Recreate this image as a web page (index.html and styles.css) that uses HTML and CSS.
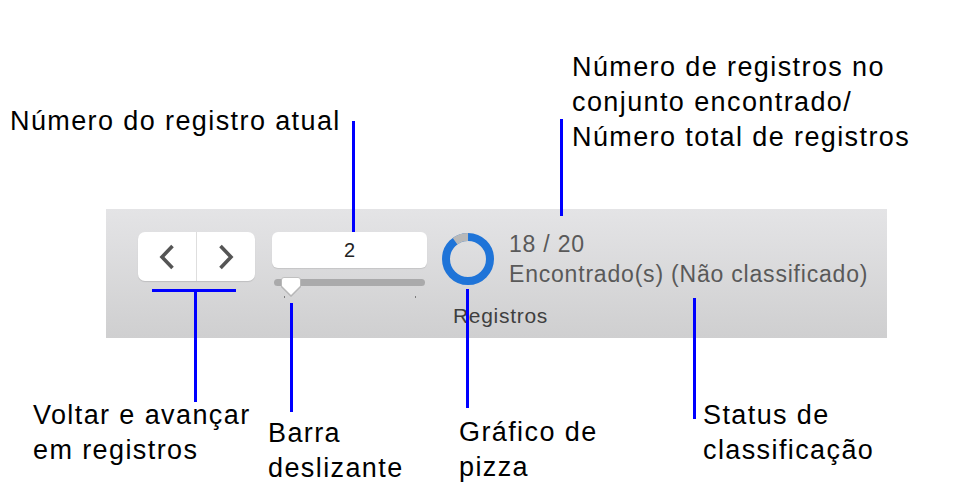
FILE: index.html
```html
<!DOCTYPE html>
<html lang="pt-BR">
<head>
<meta charset="utf-8">
<title>Registros</title>
<link rel="stylesheet" href="styles.css">
</head>
<body>
<div class="stage">
  <div class="toolbar">
    <div class="controls">
      <div class="nav">
        <span class="nav-btn">
          <svg width="18" height="28" viewBox="0 0 18 28"><polyline points="14.5,3 4,14 14.5,25" fill="none" stroke="#555" stroke-width="3.6"/></svg>
        </span>
        <span class="nav-divider"></span>
        <span class="nav-btn">
          <svg width="18" height="28" viewBox="0 0 18 28"><polyline points="3.5,3 14,14 3.5,25" fill="none" stroke="#555" stroke-width="3.6"/></svg>
        </span>
      </div>
      <div class="record">
        <div class="field">2</div>
        <div class="slider">
          <div class="track"></div>
          <svg class="thumb" width="22" height="21" viewBox="0 0 22 21"><path d="M4 1.5 H18 Q20.5 1.5 20.5 4 V10 L11 19.5 L1.5 10 V4 Q1.5 1.5 4 1.5 Z" fill="#fff" stroke="#b5b5b5" stroke-width="0.8"/></svg>
          <i class="tick tick-start"></i>
          <i class="tick tick-end"></i>
        </div>
      </div>
      <svg class="pie" width="52" height="52" viewBox="0 0 52 52">
        <circle cx="26" cy="26" r="22" fill="none" stroke="#1f74d8" stroke-width="8"/>
        <circle cx="26" cy="26" r="22" fill="none" stroke="#b8b8b8" stroke-width="8" stroke-dasharray="13.82 140" transform="rotate(-126 26 26)"/>
      </svg>
      <div class="stats">
        <div>18 / 20</div>
        <div>Encontrado(s) (Não classificado)</div>
      </div>
    </div>
    <div class="group-label">Registros</div>
  </div>

  <div class="note note-current">Número do registro atual</div>
  <div class="note note-count">Número de registros no<br>conjunto encontrado/<br>Número total de registros</div>
  <div class="note note-nav">Voltar e avançar<br>em registros</div>
  <div class="note note-slider">Barra<br>deslizante</div>
  <div class="note note-pie">Gráfico de<br>pizza</div>
  <div class="note note-sort">Status de<br>classificação</div>

  <span class="line line-current"></span>
  <span class="line line-count"></span>
  <span class="line line-nav-h"></span>
  <span class="line line-nav-v"></span>
  <span class="line line-slider"></span>
  <span class="line line-pie"></span>
  <span class="line line-sort"></span>
</div>
</body>
</html>
```

FILE: styles.css
```css
html, body {
  margin: 0;
  padding: 0;
  background: #fff;
}

.stage {
  position: relative;
  width: 961px;
  height: 504px;
  overflow: hidden;
  padding-top: 209px;
  box-sizing: border-box;
  font-family: "Liberation Sans", Arial, sans-serif;
}

.toolbar {
  margin-left: 106px;
  width: 781px;
  height: 129px;
  box-sizing: border-box;
  padding: 23px 0 0 32px;
  background: linear-gradient(#e4e4e6, #cfcfd0);
}

.controls {
  display: flex;
  align-items: flex-start;
}

.nav {
  display: flex;
  width: 117px;
  height: 49px;
  background: #fff;
  border-radius: 7px;
  box-shadow: 0 1px 1px rgba(0, 0, 0, 0.12);
}

.nav-btn {
  flex: 1;
  display: flex;
  align-items: center;
  justify-content: center;
}

.nav-divider {
  width: 1px;
  background: #dedede;
}

.record {
  margin-left: 17px;
  width: 155px;
}

.field {
  height: 36px;
  line-height: 36px;
  background: #fff;
  border-radius: 6px;
  box-shadow: 0 1px 1px rgba(0, 0, 0, 0.1);
  text-align: center;
  font-size: 20px;
  color: #222;
}

.slider {
  position: relative;
  margin-top: 11px;
  height: 20px;
}

.track {
  margin: 0 2px;
  height: 7px;
  border-radius: 4px;
  background: #aaaaab;
}

.thumb {
  position: absolute;
  left: 8px;
  top: -3px;
  filter: drop-shadow(0 1px 0.5px rgba(0, 0, 0, 0.2));
}

.tick {
  position: absolute;
  top: 17px;
  width: 1px;
  height: 2px;
  background: #7c7c7c;
}

.tick-start { left: 12px; }
.tick-end { left: 143px; }

.pie {
  margin-left: 15px;
  margin-top: 1px;
}

.stats {
  margin-left: 15px;
  margin-top: -3px;
  font-size: 23px;
  line-height: 30px;
  letter-spacing: 0.8px;
  color: #595959;
}

.group-label {
  margin-top: 5px;
  padding-left: 315px;
  font-size: 21px;
  line-height: 24px;
  letter-spacing: 0.7px;
  color: #3f3f3f;
}

.note {
  position: absolute;
  font-size: 27px;
  line-height: 35px;
  letter-spacing: 1.4px;
  color: #000;
  white-space: nowrap;
}

.note-current { left: 10px; top: 104px; }
.note-count { left: 572px; top: 50px; }
.note-nav { left: 33px; top: 398px; }
.note-slider { left: 268px; top: 416px; }
.note-pie { left: 459px; top: 415px; }
.note-sort { left: 703px; top: 398px; }

.line {
  position: absolute;
  background: #0000ff;
}

.line-current { left: 352px; top: 121px; width: 3px; height: 111px; }
.line-count { left: 560px; top: 119px; width: 3px; height: 97px; }
.line-nav-h { left: 152px; top: 289px; width: 84px; height: 3px; }
.line-nav-v { left: 194px; top: 289px; width: 3px; height: 113px; }
.line-slider { left: 290px; top: 303px; width: 3px; height: 109px; }
.line-pie { left: 466px; top: 289px; width: 3px; height: 119px; }
.line-sort { left: 693px; top: 298px; width: 3px; height: 121px; }
```
